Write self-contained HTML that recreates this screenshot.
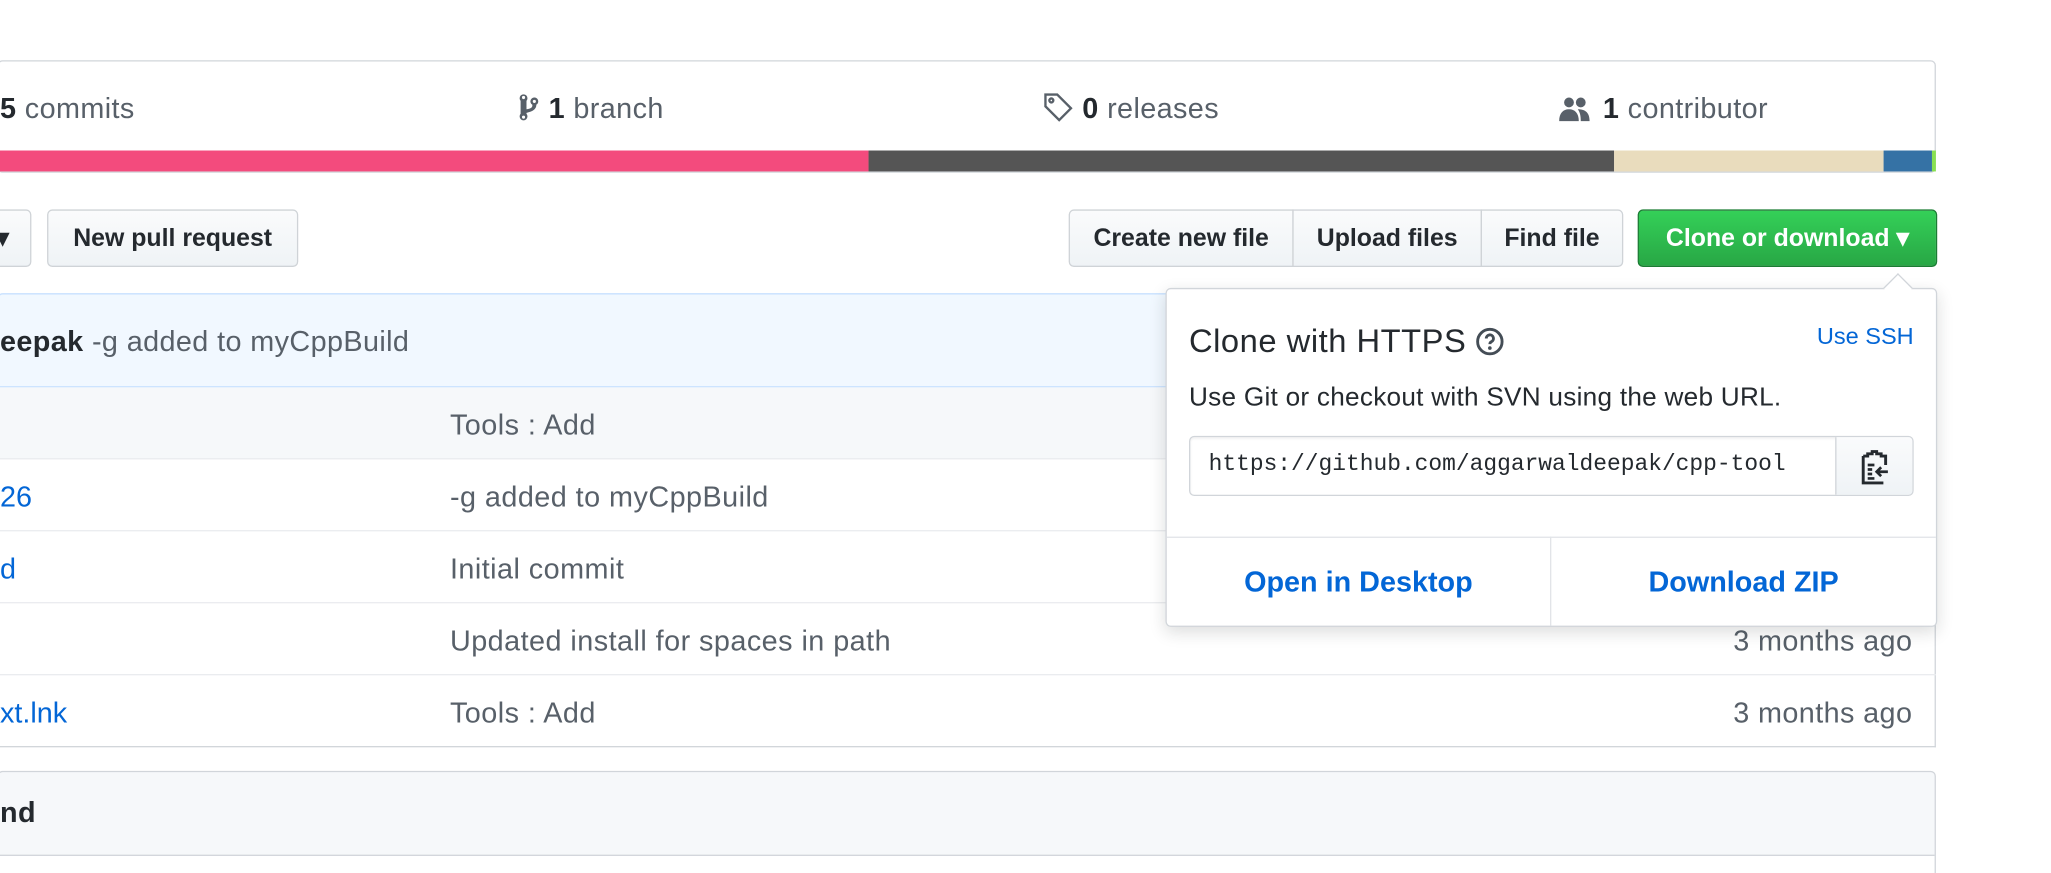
<!DOCTYPE html>
<html><head><meta charset="utf-8"><style>
html,body{margin:0;padding:0;background:#fff;overflow:hidden}
body{width:2051px;height:873px;position:relative}
#w{position:absolute;left:0;top:0;width:1568px;height:667px;transform:scale(1.30804,1.3088);transform-origin:0 0;font-family:"Liberation Sans",sans-serif;color:#24292e}
.a{position:absolute}
.t{font-size:22px;white-space:nowrap;letter-spacing:.3px}
.btn{position:absolute;top:160px;height:44px;border:1px solid #cfd3d7;background:linear-gradient(#fafbfc,#eff3f6);font-size:19px;font-weight:bold;line-height:44px;text-align:center;box-sizing:border-box;color:#24292e;border-radius:4px}
.row{position:absolute;left:-2px;width:1482px;height:55px;border-bottom:1px solid #eaecef;box-sizing:border-box}
.msg{position:absolute;left:346px;top:16px;font-size:22px;color:#586069;letter-spacing:.35px;white-space:nowrap}
.age{position:absolute;right:18px;top:16px;font-size:22px;color:#586069;letter-spacing:.3px}
.lnk{position:absolute;left:0;top:16px;font-size:22px;color:#0366d6}
</style></head><body><div id="w">
<div class="a" style="left:-2px;top:46px;width:1482px;height:86px;border:1px solid #d1d5da;border-radius:4px;box-sizing:border-box"></div>
<div class="a t" style="left:0;top:70px;color:#586069"><b style="color:#24292e">5</b> commits</div>
<div class="a t" style="left:395px;top:70px;color:#586069"><svg width="18" height="24" viewBox="0 0 10 16" style="vertical-align:-4px;fill:#586069"><path d="M10 5a2 2 0 1 0-3 1.7v.3c0 .8-.5 1.3-1 1.5-.6.3-1.3.4-2 .5V4.7A2 2 0 1 0 1 4.7v6.6A2 2 0 1 0 4 11.3v-.5c.7-.2 2.2-.5 3.3-1.2C8.6 8.8 9 7.7 9 7v-.3A2 2 0 0 0 10 5zM2.5 3.8A.8.8 0 1 1 2.5 2.2a.8.8 0 0 1 0 1.6zm0 10a.8.8 0 1 1 0-1.6.8.8 0 0 1 0 1.6zM8 5.8A.8.8 0 1 1 8 4.2a.8.8 0 0 1 0 1.6z"/></svg><b style="color:#24292e"> 1</b> branch</div>
<div class="a t" style="left:797px;top:70px;color:#586069"><svg width="24" height="24" viewBox="0 0 16 16" style="vertical-align:-4px;fill:none;stroke:#586069;stroke-width:1.2"><path d="M1.5 1.5h6l7 7-6 6-7-7z"/><circle cx="4.5" cy="4.5" r="1"/></svg><b style="color:#24292e"> 0</b> releases</div>
<div class="a t" style="left:1189px;top:70px;color:#586069"><svg width="30" height="24" viewBox="0 0 16 16" style="vertical-align:-4px;fill:#586069"><path d="M5 3a2.5 2.5 0 1 1 0 5 2.5 2.5 0 0 1 0-5zm6 0a2.5 2.5 0 1 1 0 5 2.5 2.5 0 0 1 0-5zM0 15c0-4 2-6 5-6s5 2 5 6zm9.5-6c3 0 6 1 6 6h-4.5c0-3-.5-4.5-1.5-6z"/></svg><b style="color:#24292e"> 1</b> contributor</div>
<div class="a" style="left:0;top:115px;width:664px;height:16px;background:#f34b7d"></div>
<div class="a" style="left:664px;top:115px;width:570px;height:16px;background:#555"></div>
<div class="a" style="left:1234px;top:115px;width:206px;height:16px;background:#e9dcbd"></div>
<div class="a" style="left:1440px;top:115px;width:37px;height:16px;background:#3572a5"></div>
<div class="a" style="left:1477px;top:115px;width:3px;height:16px;background:#89e051"></div>
<div class="btn" style="left:-20px;width:44px">&#9662;</div>
<div class="btn" style="left:36px;width:192px">New pull request</div>
<div class="btn" style="left:817px;width:172px;border-radius:4px 0 0 4px">Create new file</div>
<div class="btn" style="left:988px;width:145px;border-radius:0">Upload files</div>
<div class="btn" style="left:1132px;width:109px;border-radius:0 4px 4px 0">Find file</div>
<div class="btn" style="left:1252px;width:229px;background:linear-gradient(#34d058,#28a745);border-color:#1b7c33;color:#fff">Clone or download &#9662;</div>
<div class="a" style="left:-2px;top:224px;width:1482px;height:72px;background:#f1f8ff;border:1px solid #c8e1ff;box-sizing:border-box;border-radius:4px 4px 0 0"></div>
<div class="a t" style="left:0;top:248px;color:#586069"><b style="color:#24292e">eepak</b> -g added to myCppBuild</div>
<div class="a" style="left:-2px;top:296px;width:1482px;height:275px;border:1px solid #d1d5da;border-top:0;box-sizing:border-box"></div>
<div class="row" style="top:296px;background:#f6f8fa"><div class="msg">Tools : Add</div></div>
<div class="row" style="top:351px"><div class="lnk" style="left:2px">26</div><div class="msg">-g added to myCppBuild</div></div>
<div class="row" style="top:406px"><div class="lnk" style="left:2px">d</div><div class="msg">Initial commit</div></div>
<div class="row" style="top:461px"><div class="msg">Updated install for spaces in path</div><div class="age">3 months ago</div></div>
<div class="row" style="top:516px;border:0"><div class="lnk" style="left:2px">xt.lnk</div><div class="msg">Tools : Add</div><div class="age">3 months ago</div></div>
<div class="a" style="left:-2px;top:589px;width:1482px;height:90px;border:1px solid #d1d5da;border-radius:4px;box-sizing:border-box;overflow:hidden"><div style="height:63px;background:#f6f8fa;border-bottom:1px solid #d1d5da"></div></div>
<div class="a t" style="left:0;top:608px;font-weight:bold">nd</div>
<div class="a" style="left:891px;top:220px;width:590px;height:259px;background:#fff;border:1px solid #d1d5da;border-radius:4px;box-sizing:border-box;box-shadow:0 4px 12px rgba(27,31,35,.15)">
<div class="a" style="left:551px;top:-9px;width:15px;height:15px;background:#fff;border-left:1px solid #d1d5da;border-top:1px solid #d1d5da;transform:rotate(45deg)"></div>
<div class="a" style="left:17px;top:26px;font-size:25px;white-space:nowrap;letter-spacing:.4px">Clone with HTTPS <svg width="22" height="22" viewBox="0 0 16 16" style="vertical-align:-3px"><circle cx="8" cy="8" r="6.8" fill="none" stroke="#444d56" stroke-width="1.6"/><path d="M6 6.3a2 2 0 1 1 2.8 1.8c-.6.3-.8.6-.8 1.3" fill="none" stroke="#444d56" stroke-width="1.6"/><circle cx="8" cy="11.6" r="1" fill="#444d56"/></svg></div>
<div class="a" style="right:17px;top:26px;font-size:18px;color:#0366d6">Use SSH</div>
<div class="a" style="left:17px;top:72px;font-size:20px;white-space:nowrap;letter-spacing:.2px">Use Git or checkout with SVN using the web URL.</div>
<div class="a" style="left:17px;top:112px;width:554px;height:46px;border:1px solid #d1d5da;border-radius:4px;box-sizing:border-box;box-shadow:inset 0 1px 2px rgba(27,31,35,.075);overflow:hidden">
<div class="a" style="left:14px;top:11px;font-family:'Liberation Mono',monospace;font-size:17.5px;white-space:nowrap">https://github.com/aggarwaldeepak/cpp-tool</div>
<div class="a" style="right:0;top:0;width:58px;height:44px;background:linear-gradient(#fafbfc,#eff3f6);border-left:1px solid #d1d5da"><svg width="24" height="28" viewBox="0 0 14 16" style="position:absolute;left:17px;top:9px"><path d="M2 3h2V2h2V1h2v1h2v1h2v4M2 3v12h9" fill="none" stroke="#24292e" stroke-width="1.3"/><path d="M4 7h3M4 9h2M4 11h2M4 13h3M13 10H8M10 8l-2 2 2 2" fill="none" stroke="#24292e" stroke-width="1.2"/></svg></div>
</div>
<div class="a" style="left:0;top:189px;width:588px;border-top:1px solid #e1e4e8"></div>
<div class="a" style="left:293px;top:189px;height:68px;border-left:1px solid #e1e4e8"></div>
<div class="a" style="left:0;top:211px;width:293px;text-align:center;font-size:22px;font-weight:bold;color:#0366d6">Open in Desktop</div>
<div class="a" style="left:294px;top:211px;width:294px;text-align:center;font-size:22px;font-weight:bold;color:#0366d6">Download ZIP</div>
</div>
</div></body></html>
